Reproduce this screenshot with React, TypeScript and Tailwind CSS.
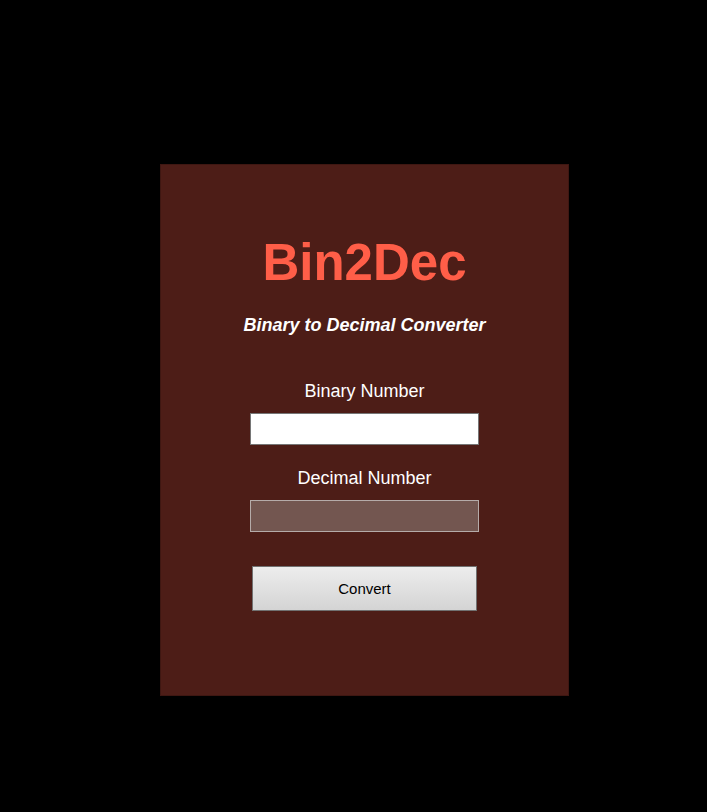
import React, { useState } from 'react';

const App: React.FC = () => {
  const [binary, setBinary] = useState('');
  const [decimal, setDecimal] = useState('');

  // binary -> decimal, ignore anything that isn't 0/1
  const handleConvert = () => {
    if (!/^[01]+$/.test(binary)) {
      setDecimal('');
      return;
    }
    setDecimal(String(parseInt(binary, 2)));
  };

  return (
    <div className="min-h-screen w-full bg-black font-['Liberation_Sans',Arial,sans-serif]">
      <div className="pt-[164px] pl-[160px] pb-[116px]">
        {/* Card */}
        <div className="w-[409px] h-[532px] bg-[#4d1d17] border border-[#3f1712] flex flex-col items-center pt-[68px]">
          <h1 className="text-[51px] leading-[59px] font-bold text-[#ff5e48]">Bin2Dec</h1>
          <p className="mt-[23px] text-[18px] leading-[21px] font-bold italic text-white">
            Binary to Decimal Converter
          </p>

          <label htmlFor="binary" className="mt-[45px] text-[18px] leading-[21px] text-white">
            Binary Number
          </label>
          <input
            id="binary"
            type="text"
            value={binary}
            onChange={(e) => setBinary(e.target.value)}
            className="mt-[11px] w-[229px] h-[32px] bg-white border border-[#767676] px-1 text-[15px] text-black outline-none"
          />

          <label htmlFor="decimal" className="mt-[23px] text-[18px] leading-[21px] text-white">
            Decimal Number
          </label>
          <input
            id="decimal"
            type="text"
            readOnly
            value={decimal}
            className="mt-[11px] w-[229px] h-[32px] bg-[#735650] border border-[#b5aba9] px-1 text-[15px] text-white outline-none"
          />

          <button
            onClick={handleConvert}
            className="mt-[34px] w-[225px] h-[45px] pt-[2px] bg-gradient-to-b from-[#ededed] to-[#d4d4d4] border border-[#717171] text-[15px] text-black"
          >
            Convert
          </button>
        </div>
      </div>
    </div>
  );
};

export default App;
